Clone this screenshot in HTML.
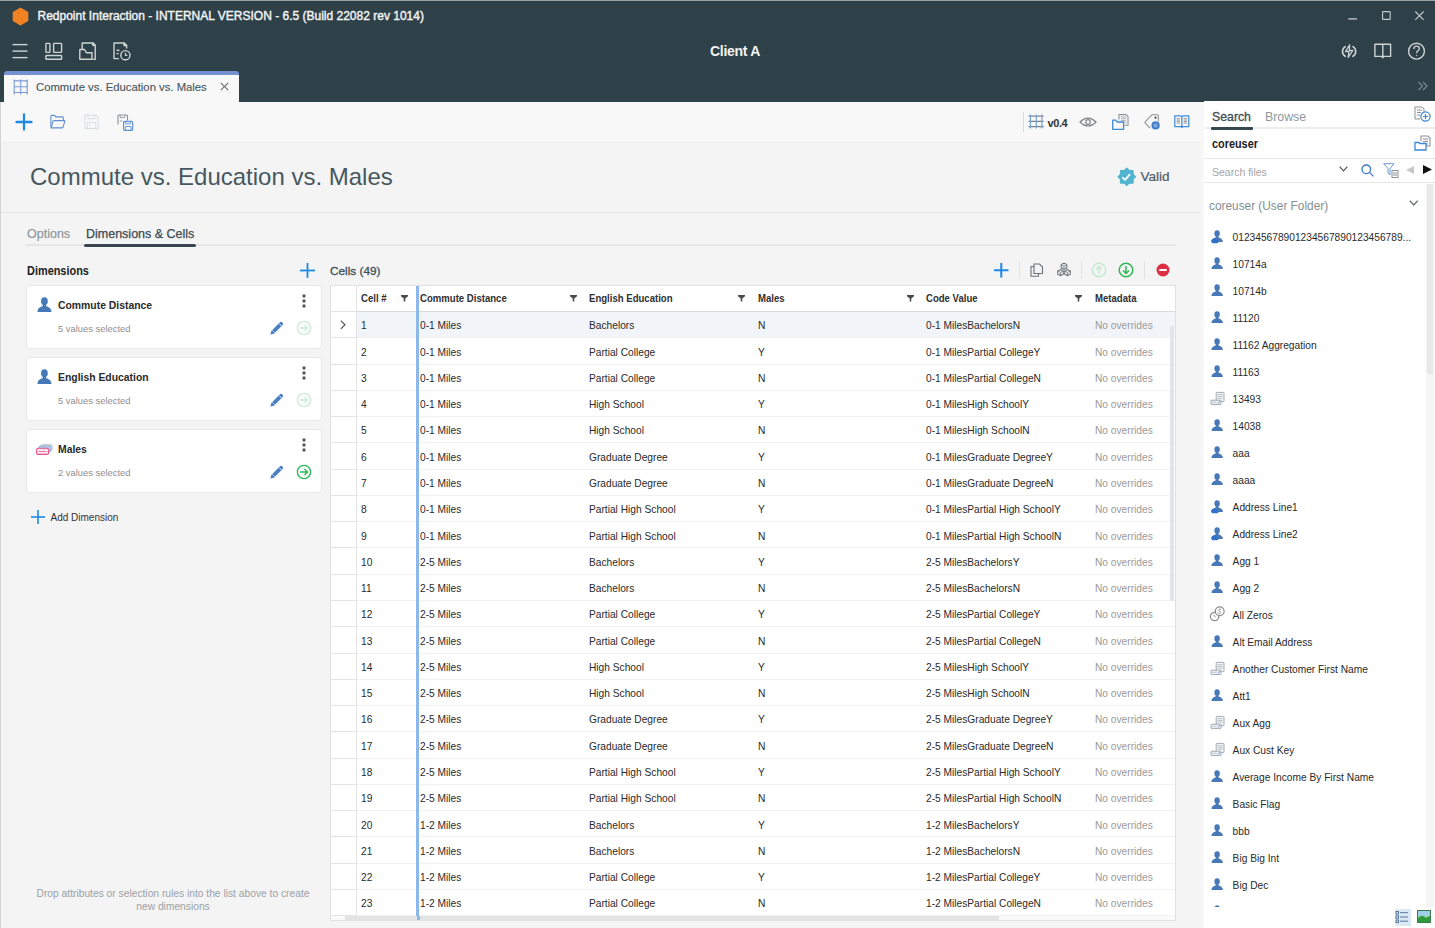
<!DOCTYPE html><html><head><meta charset="utf-8"><style>
*{box-sizing:border-box;margin:0;padding:0}
html,body{width:1435px;height:928px;overflow:hidden;background:#f4f4f4;font-family:"Liberation Sans",sans-serif;position:relative}
.a{position:absolute}
svg{position:absolute;overflow:visible}
.hdr{left:0;top:0;width:1435px;height:102px;background:#2e4048}
.topline{left:0;top:0;width:1435px;height:1px;background:#9aa3a6}
.wt{color:#f2f4f4;white-space:nowrap}
.tab{left:4px;top:71px;width:235px;height:31px;background:#f8f8f8;border-top:4px solid #7491d2;border-radius:3px 3px 0 0}
.tb{left:1px;top:102px;width:1200px;height:41px;background:#f8f8f8;border-bottom:1px solid #ececec}
.lb{left:0;top:102px;width:1px;height:826px;background:#d2d4d5}
.title{left:30px;top:163px;font-size:24px;color:#47575f;white-space:nowrap;letter-spacing:0px}
.sep{left:1px;top:212px;width:1200px;height:1px;background:#e6e6e6}
.t{white-space:nowrap}
.card{left:26px;width:296px;height:64px;background:#fff;border:1px solid #e5e7e9;border-radius:4px}
.tbl{left:330px;top:285px;width:846px;height:636px;background:#fff;border:1px solid #e0e0e0;overflow:hidden}
.row{left:0;width:844px;height:26.27px;border-bottom:1px solid #f1f1f1}
.cell{font-size:10.2px;color:#2a2a2a;white-space:nowrap}
.rp{left:1204px;top:101px;width:231px;height:827px;background:#fff}
.li{font-size:10.2px;color:#2a2a2a;white-space:nowrap}
</style></head><body>
<div class="a hdr"></div><div class="a topline"></div>
<svg style="left:12px;top:7px" width="17" height="19" viewBox="0 0 17 19"><polygon points="8.5,0.5 16.3,5 16.3,14 8.5,18.5 0.7,14 0.7,5" fill="#f08224"/></svg>
<div class="a wt" style="left:37.5px;top:8.8px;font-size:12px;line-height:15px;-webkit-text-stroke:0.4px #f2f4f4">Redpoint Interaction - INTERNAL VERSION - 6.5 (Build 22082 rev 1014)</div>
<svg style="left:1340px;top:0px" width="95" height="30" viewBox="1340 0 95 30" fill="none" stroke="#c4cbcd" stroke-width="1.1"><line x1="1348.3" y1="18.9" x2="1357" y2="18.9" stroke-width="1.3"/><rect x="1382.6" y="11.6" width="7.6" height="7.8" rx="0.5"/><line x1="1415.3" y1="11.5" x2="1423.6" y2="19.8"/><line x1="1423.6" y1="11.5" x2="1415.3" y2="19.8"/></svg>
<svg style="left:0px;top:35px" width="140" height="30" viewBox="0 0 140 30" fill="none" stroke="#cdd2d3" stroke-width="1.4" stroke-linejoin="round"><line x1="12.5" y1="9.6" x2="27.5" y2="9.6"/><line x1="12.5" y1="16.1" x2="27.5" y2="16.1"/><line x1="12.5" y1="22.6" x2="27.5" y2="22.6"/><rect x="45.9" y="8.4" width="4" height="9" rx="0.6"/><rect x="53.6" y="8.4" width="8" height="9" rx="0.6"/><rect x="45.9" y="20.5" width="15.7" height="3.8" rx="0.6"/><path d="M82.2 14 V8 H93 L95.2 10.2 V24.4 H92.8"/><path d="M92.8 10.2 H95 L92.8 8 Z" fill="#cdd2d3"/><path d="M79.8 24.3 V14.5 H84.5 L86.5 17.8 H92 V24.3 Z"/><path d="M119 23.6 H114 V8 H124 L126.6 10.6 V13.5"/><path d="M124 8 V10.6 H126.6 Z" fill="#cdd2d3"/><line x1="116.5" y1="15.3" x2="119.5" y2="15.3"/><line x1="116.5" y1="18.6" x2="118.5" y2="18.6"/><circle cx="125.4" cy="20.2" r="4.6"/><path d="M125.4 17.8 V20.4 H127.4" stroke-width="1.1"/></svg>
<div class="a wt" style="left:710px;top:42.8px;font-size:14px;font-weight:bold;line-height:16px;letter-spacing:-0.3px">Client A</div>
<svg style="left:1335px;top:40px" width="95" height="22" viewBox="1335 40 95 22" fill="none" stroke="#cdd2d3" stroke-width="1.4" stroke-linejoin="round"><path d="M1345.3 46.6 A5.6 5.6 0 0 0 1345.3 56.3" stroke-width="1.6" stroke-linecap="round"/><path d="M1352.9 46.6 A5.6 5.6 0 0 1 1352.9 56.3" stroke-width="1.6" stroke-linecap="round"/><path d="M1349.7 44.8 L1345.5 51.5 H1348.9 L1348.2 57.4 L1352.8 50.5 H1349.3 Z" stroke-width="1.3"/><path d="M1374.9 44.3 H1382.8 V56.4 H1374.9 Z M1382.8 44.3 H1390.6 V56.4 H1382.8"/><path d="M1381.6 56.6 L1382.8 58 L1384 56.6" stroke-width="1.1"/><circle cx="1416.5" cy="51.2" r="7.9"/><path d="M1413.9 49 Q1413.9 46.1 1416.6 46.1 Q1419.3 46.1 1419.3 48.6 Q1419.3 50.1 1417.6 51 Q1416.6 51.6 1416.6 53.3" stroke-width="1.3"/><circle cx="1416.6" cy="55.6" r="0.7" fill="#cdd2d3" stroke="none"/></svg>
<svg style="left:1417px;top:81px" width="12" height="10" viewBox="0 0 12 10" fill="none" stroke="#7d8b90" stroke-width="1.1"><path d="M1.5 1 L5.5 5 L1.5 9 M6 1 L10 5 L6 9"/></svg>
<div class="a tab"></div>
<svg style="left:13px;top:79px" width="16" height="16" viewBox="0 0 16 16" fill="none" stroke="#7c9bd6" stroke-width="1.1"><path d="M1.2 0.5 V15.5 M7.7 0.5 V15.5 M14.2 0.5 V15.5 M0.5 1.9 H15 M0.5 7.7 H15 M0.5 13.5 H15"/></svg>
<div class="a t" style="left:36px;top:80px;font-size:11.3px;color:#4a5960;line-height:14px;-webkit-text-stroke:0.15px #4a5960">Commute vs. Education vs. Males</div>
<svg style="left:220px;top:82px" width="9" height="9" viewBox="0 0 9 9" fill="none" stroke="#6d7479" stroke-width="1.2"><path d="M0.8 0.8 L8.2 8.2 M8.2 0.8 L0.8 8.2"/></svg>
<div class="a tb"></div><div class="a lb"></div>
<div class="a" style="left:1201px;top:102px;width:3px;height:826px;background:#f7f7f7"></div>
<svg style="left:15px;top:113px" width="18" height="18" viewBox="0 0 18 18" fill="none" stroke="#1e88e5" stroke-width="2.3" stroke-linecap="round"><line x1="9" y1="1.5" x2="9" y2="16.5"/><line x1="1.5" y1="9" x2="16.5" y2="9"/></svg>
<svg style="left:48px;top:112px" width="90" height="20" viewBox="48 112 90 20" fill="none" stroke-linejoin="round"><path d="M50.9 127.3 V116.2 Q50.9 115.4 51.7 115.4 H54.6 L55.7 116.9 H62.4 Q63.3 116.9 63.3 117.8 V120.4" stroke="#5f8fd0" stroke-width="1.1"/><path d="M51.1 127.9 L53.1 121.2 Q53.3 120.6 53.9 120.6 H64.3 Q65 120.6 64.8 121.3 L63.1 127.2 Q62.9 127.9 62.2 127.9 Z" stroke="#5f8fd0" stroke-width="1.1"/><path d="M85 115.2 H96.2 L98.1 117.1 V128.6 H85 Z" stroke="#d6dde6" stroke-width="1"/><path d="M88 115.2 V118.6 H94.6 V115.2 M87.3 128.6 V122.3 H95.8 V128.6 M88.8 124.5 H91" stroke="#d6dde6" stroke-width="0.9"/><path d="M118 124.4 V116 Q118 115 119 115 H126.6 Q127.5 115 127.5 116 V120.5" stroke="#8c9195" stroke-width="1.1"/><path d="M120.2 115 V117.6 H124.8 V115 M119.6 121 H122.5" stroke="#8c9195" stroke-width="0.8"/><rect x="123.6" y="121.3" width="9.1" height="9" rx="1.3" stroke="#5f8fd0" stroke-width="1.2" fill="#f8f8f8"/><path d="M125.8 121.3 V123.8 H130.4 V121.3 M125.4 130.3 V126.5 H131 V130.3" stroke="#5f8fd0" stroke-width="0.9"/></svg>
<div class="a" style="left:1023px;top:112px;width:1px;height:20px;background:#dcdcdc"></div>
<svg style="left:1027px;top:113px" width="18" height="17" viewBox="1027 113 18 17" fill="none" stroke-width="1.2"><path d="M1028.5 116.2 H1043.7 M1028.5 121.4 H1043.7 M1028.5 126.6 H1043.7" stroke="#7d858c"/><path d="M1030.4 114.5 V128.5 M1036.3 114.5 V128.5 M1041.9 114.5 V128.5" stroke="#79a0d8"/></svg>
<div class="a t" style="left:1047.5px;top:116.8px;font-size:11px;font-weight:bold;color:#333;line-height:13px;letter-spacing:-0.4px">v0.4</div>
<svg style="left:1079px;top:116px" width="18" height="12" viewBox="0 0 18 12" fill="none" stroke="#7c8287" stroke-width="1.2"><path d="M1 6 Q9 -2 17 6 Q9 14 1 6 Z"/><circle cx="9" cy="6" r="2.3"/></svg>
<svg style="left:1108px;top:110px" width="90" height="24" viewBox="1108 110 90 24" fill="none" stroke-width="1.1" stroke-linejoin="round"><path d="M1119 119.5 V114.6 H1126 L1128 116.6 V125.3 H1124.5" stroke="#8c9195"/><path d="M1120.8 117 H1126 M1120.8 118.8 H1126 M1120.8 120.6 H1126 M1124.6 122.4 H1126" stroke="#8c9195" stroke-width="0.7"/><path d="M1112.7 120.2 H1115.8 L1117.3 122 H1123.6 V129.3 H1112.7 Z" stroke="#3d8ad8" stroke-width="1.3" fill="#f8f8f8"/><path d="M1158.3 121 V115.8 Q1158.3 114.7 1157.2 114.7 H1152.2 L1145.3 121.6 Q1144.6 122.4 1145.3 123.2 L1150 128.2" stroke="#8c9195" stroke-width="1.1"/><path d="M1155.5 116.4 V119 M1154.2 117.7 H1156.8" stroke="#555" stroke-width="0.9"/><circle cx="1155.6" cy="125.4" r="4.1" fill="#3f7ccc" stroke="none"/><path d="M1153.6 125.4 H1157.6 M1153.8 124.3 Q1155.6 123.3 1157.4 124.3 M1153.8 126.5 Q1155.6 127.5 1157.4 126.5" stroke="#cfe0f5" stroke-width="0.6"/><path d="M1174.8 115.9 H1180.3 Q1181.8 115.9 1181.8 117.2 Q1181.8 115.9 1183.3 115.9 H1188.8 V126.6 H1174.8 Z M1181.8 117.2 V126.6" stroke="#3d8ad8" stroke-width="1.2"/><circle cx="1181.8" cy="127.2" r="0.9" fill="#3d8ad8" stroke="none"/><path d="M1176.6 118.6 H1180 M1176.6 120.1 H1180 M1176.6 121.6 H1180 M1176.6 123.1 H1180 M1183.6 118.6 H1187 M1183.6 120.1 H1187 M1183.6 121.6 H1187 M1183.6 123.1 H1187" stroke="#7a7a7a" stroke-width="0.7"/></svg>
<div class="a title">Commute vs. Education vs. Males</div>
<svg style="left:1116px;top:166px" width="22" height="22" viewBox="1116 166 22 22"><rect x="1119.9" y="169.9" width="13.8" height="13.8" rx="0.8" fill="#52b4cf"/><rect x="1120" y="170" width="13.6" height="13.6" rx="0.8" fill="#52b4cf" transform="rotate(45 1126.8 176.8)"/><path d="M1122.9 177.8 L1125.1 179.8 L1129.6 174.6" fill="none" stroke="#fff" stroke-width="1.8" stroke-linecap="round" stroke-linejoin="round"/></svg>
<div class="a t" style="left:1140.5px;top:169px;font-size:13.5px;color:#4d5c64;line-height:16px;-webkit-text-stroke:0.2px #4d5c64">Valid</div>
<div class="a sep"></div>
<div class="a" style="left:26px;top:244px;width:1150px;height:2px;background:#e6e6e6"></div>
<div class="a t" style="left:27px;top:227px;font-size:12.5px;color:#8d979c;line-height:15px;-webkit-text-stroke:0.2px #8d979c">Options</div>
<div class="a t" style="left:86px;top:227px;font-size:12.5px;color:#3a4a52;line-height:15px;-webkit-text-stroke:0.25px #3a4a52">Dimensions &amp; Cells</div>
<div class="a" style="left:84px;top:244.3px;width:111.5px;height:3px;background:#37474f;border-radius:1.5px"></div>
<div class="a t" style="left:26.5px;top:264px;font-size:12px;font-weight:bold;color:#222;line-height:14px;transform:scaleX(0.91);transform-origin:0 0">Dimensions</div>
<svg style="left:300px;top:263px" width="15" height="15" viewBox="0 0 15 15" fill="none" stroke="#1e88e5" stroke-width="1.8"><line x1="7.5" y1="0" x2="7.5" y2="15"/><line x1="0" y1="7.5" x2="15" y2="7.5"/></svg>
<div class="a card" style="top:285px"></div>
<svg style="left:36.8px;top:297px" width="15" height="15" viewBox="0 0 15 15"><ellipse fill="#4779b9" cx="7.4" cy="4.3" rx="3.35" ry="4"/><path fill="#4779b9" d="M0.5 14.9 C0.5 11.3 3 9.9 5.6 9.2 L5.9 7 H8.9 L9.2 9.2 C11.8 9.9 14.5 11.3 14.5 14.9 Z"/></svg>
<div class="a t" style="left:58px;top:299px;font-size:11.3px;font-weight:bold;color:#2a2a2a;line-height:13px;transform:scaleX(0.92);transform-origin:0 0">Commute Distance</div>
<div class="a t" style="left:58px;top:323.4px;font-size:9.4px;color:#8f8f8f;line-height:11px">5 values selected</div>
<svg style="left:302px;top:294px" width="4" height="14" viewBox="0 0 4 14" fill="#5c5c5c"><circle cx="2" cy="1.9" r="1.75"/><circle cx="2" cy="7" r="1.75"/><circle cx="2" cy="12.1" r="1.75"/></svg>
<svg style="left:270px;top:321px" width="14" height="14" viewBox="0 0 14 14"><path d="M0.3 13.5 L1.3 10 L10.2 1.1 Q11 0.4 11.8 1.1 L12.9 2.2 Q13.6 3 12.9 3.8 L4 12.7 Z" fill="#4a7fc1"/><path d="M9 2.4 L11.6 5" stroke="#fff" stroke-width="0.8"/><path d="M2.2 9.3 L4.7 11.8" stroke="#fff" stroke-width="0.6"/></svg>
<svg style="left:296px;top:320px" width="16" height="16" viewBox="0 0 16 16" fill="none" stroke="#c9edd5" stroke-width="1.4"><circle cx="8" cy="8" r="6.6"/><path d="M4 8 H11.5 M8.5 5 L11.5 8 L8.5 11"/></svg>
<div class="a card" style="top:357px"></div>
<svg style="left:36.8px;top:369px" width="15" height="15" viewBox="0 0 15 15"><ellipse fill="#4779b9" cx="7.4" cy="4.3" rx="3.35" ry="4"/><path fill="#4779b9" d="M0.5 14.9 C0.5 11.3 3 9.9 5.6 9.2 L5.9 7 H8.9 L9.2 9.2 C11.8 9.9 14.5 11.3 14.5 14.9 Z"/></svg>
<div class="a t" style="left:58px;top:371px;font-size:11.3px;font-weight:bold;color:#2a2a2a;line-height:13px;transform:scaleX(0.92);transform-origin:0 0">English Education</div>
<div class="a t" style="left:58px;top:395.4px;font-size:9.4px;color:#8f8f8f;line-height:11px">5 values selected</div>
<svg style="left:302px;top:366px" width="4" height="14" viewBox="0 0 4 14" fill="#5c5c5c"><circle cx="2" cy="1.9" r="1.75"/><circle cx="2" cy="7" r="1.75"/><circle cx="2" cy="12.1" r="1.75"/></svg>
<svg style="left:270px;top:393px" width="14" height="14" viewBox="0 0 14 14"><path d="M0.3 13.5 L1.3 10 L10.2 1.1 Q11 0.4 11.8 1.1 L12.9 2.2 Q13.6 3 12.9 3.8 L4 12.7 Z" fill="#4a7fc1"/><path d="M9 2.4 L11.6 5" stroke="#fff" stroke-width="0.8"/><path d="M2.2 9.3 L4.7 11.8" stroke="#fff" stroke-width="0.6"/></svg>
<svg style="left:296px;top:392px" width="16" height="16" viewBox="0 0 16 16" fill="none" stroke="#c9edd5" stroke-width="1.4"><circle cx="8" cy="8" r="6.6"/><path d="M4 8 H11.5 M8.5 5 L11.5 8 L8.5 11"/></svg>
<div class="a card" style="top:429px"></div>
<svg style="left:35px;top:443px" width="19" height="13" viewBox="35 443 19 13"><rect x="40.8" y="444.6" width="11.4" height="6.3" rx="1.6" fill="#d9d9d9" stroke="#bdbdbd" stroke-width="0.8"/><rect x="38.7" y="446" width="12" height="6.3" rx="1.6" fill="#b3cfee" stroke="#7eabdf" stroke-width="0.8"/><rect x="36.6" y="448.3" width="12" height="6.1" rx="1.5" fill="#f7d3e2" stroke="#e5578e" stroke-width="1.1"/><rect x="38.4" y="450" width="8.4" height="2.8" fill="#fff"/><line x1="38.8" y1="451.5" x2="46.4" y2="451.5" stroke="#e5578e" stroke-width="0.9"/></svg>
<div class="a t" style="left:58px;top:443px;font-size:11.3px;font-weight:bold;color:#2a2a2a;line-height:13px;transform:scaleX(0.92);transform-origin:0 0">Males</div>
<div class="a t" style="left:58px;top:467.4px;font-size:9.4px;color:#8f8f8f;line-height:11px">2 values selected</div>
<svg style="left:302px;top:438px" width="4" height="14" viewBox="0 0 4 14" fill="#5c5c5c"><circle cx="2" cy="1.9" r="1.75"/><circle cx="2" cy="7" r="1.75"/><circle cx="2" cy="12.1" r="1.75"/></svg>
<svg style="left:270px;top:465px" width="14" height="14" viewBox="0 0 14 14"><path d="M0.3 13.5 L1.3 10 L10.2 1.1 Q11 0.4 11.8 1.1 L12.9 2.2 Q13.6 3 12.9 3.8 L4 12.7 Z" fill="#4a7fc1"/><path d="M9 2.4 L11.6 5" stroke="#fff" stroke-width="0.8"/><path d="M2.2 9.3 L4.7 11.8" stroke="#fff" stroke-width="0.6"/></svg>
<svg style="left:296px;top:464px" width="16" height="16" viewBox="0 0 16 16" fill="none" stroke="#2fb855" stroke-width="1.4"><circle cx="8" cy="8" r="6.6"/><path d="M4 8 H11.5 M8.5 5 L11.5 8 L8.5 11"/></svg>
<svg style="left:31px;top:510px" width="14" height="14" viewBox="0 0 14 14" fill="none" stroke="#1e88e5" stroke-width="1.6"><line x1="7" y1="0" x2="7" y2="14"/><line x1="0" y1="7" x2="14" y2="7"/></svg>
<div class="a t" style="left:50.5px;top:511.5px;font-size:10px;color:#333;line-height:12px">Add Dimension</div>
<div class="a" style="left:23px;top:887px;width:300px;font-size:10.25px;color:#9ca1a5;line-height:13px;text-align:center">Drop attributes or selection rules into the list above to create<br>new dimensions</div>
<div class="a t" style="left:330px;top:263.5px;font-size:11.8px;color:#3d4e57;line-height:14px;-webkit-text-stroke:0.3px #3d4e57">Cells (49)</div>
<svg style="left:993.5px;top:263px" width="14.5" height="14.5" viewBox="0 0 14.5 14.5" fill="none" stroke="#1e88e5" stroke-width="2" stroke-linecap="round"><line x1="7.25" y1="0.8" x2="7.25" y2="13.7"/><line x1="0.8" y1="7.25" x2="13.7" y2="7.25"/></svg>
<div class="a" style="left:1019px;top:261px;width:1px;height:18px;background:#e2e2e2"></div>
<svg style="left:1030px;top:263px" width="13" height="14" viewBox="0 0 13 14" fill="none" stroke="#6d7378" stroke-width="1.1"><path d="M4 1 H9.5 L12.5 4 V10.5 H4 Z"/><path d="M4 3.5 H1 V13.3 H8.5 V10.5"/></svg>
<svg style="left:1056px;top:262px" width="16" height="16" viewBox="0 0 16 16" fill="#f4f4f4" stroke="#6d7378" stroke-width="1.1"><path d="M8 1.2 L10.8 2.6 V5.8 L8 7.2 L5.2 5.8 V2.6 Z"/><path d="M4.5 7.6 L7.3 9 V12.2 L4.5 13.6 L1.7 12.2 V9 Z"/><path d="M11.5 7.6 L14.3 9 V12.2 L11.5 13.6 L8.7 12.2 V9 Z"/><path d="M5.2 2.6 L8 4 L10.8 2.6 M8 4 V7.2 M1.7 9 L4.5 10.4 L7.3 9 M4.5 10.4 V13.6 M8.7 9 L11.5 10.4 L14.3 9 M11.5 10.4 V13.6" stroke-width="0.8"/></svg>
<div class="a" style="left:1081px;top:261px;width:1px;height:18px;background:#e2e2e2"></div>
<svg style="left:1091px;top:262px" width="16" height="16" viewBox="0 0 16 16" fill="none" stroke="#c4ead0" stroke-width="1.4"><circle cx="8" cy="8" r="6.8"/><path d="M8 12 V4.5 M5 7.5 L8 4.5 L11 7.5"/></svg>
<svg style="left:1118px;top:262px" width="16" height="16" viewBox="0 0 16 16" fill="none" stroke="#2fb855" stroke-width="1.5"><circle cx="8" cy="8" r="6.8"/><path d="M8 4 V11.5 M5 8.5 L8 11.5 L11 8.5"/></svg>
<div class="a" style="left:1144px;top:261px;width:1px;height:18px;background:#e2e2e2"></div>
<svg style="left:1155.7px;top:262.8px" width="14" height="14" viewBox="0 0 14 14"><circle cx="7" cy="7" r="6.5" fill="#dc2f46"/><rect x="3.2" y="6" width="7.6" height="2.1" rx="0.5" fill="#fff"/></svg>
<div class="a tbl">
<div class="a" style="left:0;top:0;width:844px;height:26px;border-bottom:1px solid #dadada"></div>
<div class="a t" style="left:30px;top:7px;font-size:10.2px;font-weight:bold;color:#303030;line-height:12px;transform:scaleX(0.94);transform-origin:0 0">Cell #</div>
<svg style="left:69.5px;top:8.8px" width="7" height="7" viewBox="0 0 7 7"><path d="M0 0 H7 V1.3 L4.3 3.6 V6.6 H2.7 V3.6 L0 1.3 Z" fill="#4a4a4a"/></svg>
<div class="a t" style="left:89px;top:7px;font-size:10.2px;font-weight:bold;color:#303030;line-height:12px;transform:scaleX(0.94);transform-origin:0 0">Commute Distance</div>
<svg style="left:238.5px;top:8.8px" width="7" height="7" viewBox="0 0 7 7"><path d="M0 0 H7 V1.3 L4.3 3.6 V6.6 H2.7 V3.6 L0 1.3 Z" fill="#4a4a4a"/></svg>
<div class="a t" style="left:258px;top:7px;font-size:10.2px;font-weight:bold;color:#303030;line-height:12px;transform:scaleX(0.94);transform-origin:0 0">English Education</div>
<svg style="left:407px;top:8.8px" width="7" height="7" viewBox="0 0 7 7"><path d="M0 0 H7 V1.3 L4.3 3.6 V6.6 H2.7 V3.6 L0 1.3 Z" fill="#4a4a4a"/></svg>
<div class="a t" style="left:427px;top:7px;font-size:10.2px;font-weight:bold;color:#303030;line-height:12px;transform:scaleX(0.94);transform-origin:0 0">Males</div>
<svg style="left:575.5px;top:8.8px" width="7" height="7" viewBox="0 0 7 7"><path d="M0 0 H7 V1.3 L4.3 3.6 V6.6 H2.7 V3.6 L0 1.3 Z" fill="#4a4a4a"/></svg>
<div class="a t" style="left:595px;top:7px;font-size:10.2px;font-weight:bold;color:#303030;line-height:12px;transform:scaleX(0.94);transform-origin:0 0">Code Value</div>
<svg style="left:744px;top:8.8px" width="7" height="7" viewBox="0 0 7 7"><path d="M0 0 H7 V1.3 L4.3 3.6 V6.6 H2.7 V3.6 L0 1.3 Z" fill="#4a4a4a"/></svg>
<div class="a t" style="left:764px;top:7px;font-size:10.2px;font-weight:bold;color:#303030;line-height:12px;transform:scaleX(0.94);transform-origin:0 0">Metadata</div>
<div class="a row" style="top:26.00px;background:#f1f5f9"></div>
<div class="a cell" style="left:30px;top:34.40px;line-height:12px">1</div>
<div class="a cell" style="left:89px;top:34.40px;line-height:12px">0-1 Miles</div>
<div class="a cell" style="left:258px;top:34.40px;line-height:12px">Bachelors</div>
<div class="a cell" style="left:427px;top:34.40px;line-height:12px">N</div>
<div class="a cell" style="left:595px;top:34.40px;line-height:12px">0-1 MilesBachelorsN</div>
<div class="a cell" style="left:764px;top:34.40px;line-height:12px;color:#9a9a9a">No overrides</div>
<div class="a row" style="top:52.27px;background:#fff"></div>
<div class="a cell" style="left:30px;top:60.67px;line-height:12px">2</div>
<div class="a cell" style="left:89px;top:60.67px;line-height:12px">0-1 Miles</div>
<div class="a cell" style="left:258px;top:60.67px;line-height:12px">Partial College</div>
<div class="a cell" style="left:427px;top:60.67px;line-height:12px">Y</div>
<div class="a cell" style="left:595px;top:60.67px;line-height:12px">0-1 MilesPartial CollegeY</div>
<div class="a cell" style="left:764px;top:60.67px;line-height:12px;color:#9a9a9a">No overrides</div>
<div class="a row" style="top:78.54px;background:#fff"></div>
<div class="a cell" style="left:30px;top:86.94px;line-height:12px">3</div>
<div class="a cell" style="left:89px;top:86.94px;line-height:12px">0-1 Miles</div>
<div class="a cell" style="left:258px;top:86.94px;line-height:12px">Partial College</div>
<div class="a cell" style="left:427px;top:86.94px;line-height:12px">N</div>
<div class="a cell" style="left:595px;top:86.94px;line-height:12px">0-1 MilesPartial CollegeN</div>
<div class="a cell" style="left:764px;top:86.94px;line-height:12px;color:#9a9a9a">No overrides</div>
<div class="a row" style="top:104.81px;background:#fff"></div>
<div class="a cell" style="left:30px;top:113.21px;line-height:12px">4</div>
<div class="a cell" style="left:89px;top:113.21px;line-height:12px">0-1 Miles</div>
<div class="a cell" style="left:258px;top:113.21px;line-height:12px">High School</div>
<div class="a cell" style="left:427px;top:113.21px;line-height:12px">Y</div>
<div class="a cell" style="left:595px;top:113.21px;line-height:12px">0-1 MilesHigh SchoolY</div>
<div class="a cell" style="left:764px;top:113.21px;line-height:12px;color:#9a9a9a">No overrides</div>
<div class="a row" style="top:131.08px;background:#fff"></div>
<div class="a cell" style="left:30px;top:139.48px;line-height:12px">5</div>
<div class="a cell" style="left:89px;top:139.48px;line-height:12px">0-1 Miles</div>
<div class="a cell" style="left:258px;top:139.48px;line-height:12px">High School</div>
<div class="a cell" style="left:427px;top:139.48px;line-height:12px">N</div>
<div class="a cell" style="left:595px;top:139.48px;line-height:12px">0-1 MilesHigh SchoolN</div>
<div class="a cell" style="left:764px;top:139.48px;line-height:12px;color:#9a9a9a">No overrides</div>
<div class="a row" style="top:157.35px;background:#fff"></div>
<div class="a cell" style="left:30px;top:165.75px;line-height:12px">6</div>
<div class="a cell" style="left:89px;top:165.75px;line-height:12px">0-1 Miles</div>
<div class="a cell" style="left:258px;top:165.75px;line-height:12px">Graduate Degree</div>
<div class="a cell" style="left:427px;top:165.75px;line-height:12px">Y</div>
<div class="a cell" style="left:595px;top:165.75px;line-height:12px">0-1 MilesGraduate DegreeY</div>
<div class="a cell" style="left:764px;top:165.75px;line-height:12px;color:#9a9a9a">No overrides</div>
<div class="a row" style="top:183.62px;background:#fff"></div>
<div class="a cell" style="left:30px;top:192.02px;line-height:12px">7</div>
<div class="a cell" style="left:89px;top:192.02px;line-height:12px">0-1 Miles</div>
<div class="a cell" style="left:258px;top:192.02px;line-height:12px">Graduate Degree</div>
<div class="a cell" style="left:427px;top:192.02px;line-height:12px">N</div>
<div class="a cell" style="left:595px;top:192.02px;line-height:12px">0-1 MilesGraduate DegreeN</div>
<div class="a cell" style="left:764px;top:192.02px;line-height:12px;color:#9a9a9a">No overrides</div>
<div class="a row" style="top:209.89px;background:#fff"></div>
<div class="a cell" style="left:30px;top:218.29px;line-height:12px">8</div>
<div class="a cell" style="left:89px;top:218.29px;line-height:12px">0-1 Miles</div>
<div class="a cell" style="left:258px;top:218.29px;line-height:12px">Partial High School</div>
<div class="a cell" style="left:427px;top:218.29px;line-height:12px">Y</div>
<div class="a cell" style="left:595px;top:218.29px;line-height:12px">0-1 MilesPartial High SchoolY</div>
<div class="a cell" style="left:764px;top:218.29px;line-height:12px;color:#9a9a9a">No overrides</div>
<div class="a row" style="top:236.16px;background:#fff"></div>
<div class="a cell" style="left:30px;top:244.56px;line-height:12px">9</div>
<div class="a cell" style="left:89px;top:244.56px;line-height:12px">0-1 Miles</div>
<div class="a cell" style="left:258px;top:244.56px;line-height:12px">Partial High School</div>
<div class="a cell" style="left:427px;top:244.56px;line-height:12px">N</div>
<div class="a cell" style="left:595px;top:244.56px;line-height:12px">0-1 MilesPartial High SchoolN</div>
<div class="a cell" style="left:764px;top:244.56px;line-height:12px;color:#9a9a9a">No overrides</div>
<div class="a row" style="top:262.43px;background:#fff"></div>
<div class="a cell" style="left:30px;top:270.83px;line-height:12px">10</div>
<div class="a cell" style="left:89px;top:270.83px;line-height:12px">2-5 Miles</div>
<div class="a cell" style="left:258px;top:270.83px;line-height:12px">Bachelors</div>
<div class="a cell" style="left:427px;top:270.83px;line-height:12px">Y</div>
<div class="a cell" style="left:595px;top:270.83px;line-height:12px">2-5 MilesBachelorsY</div>
<div class="a cell" style="left:764px;top:270.83px;line-height:12px;color:#9a9a9a">No overrides</div>
<div class="a row" style="top:288.70px;background:#fff"></div>
<div class="a cell" style="left:30px;top:297.10px;line-height:12px">11</div>
<div class="a cell" style="left:89px;top:297.10px;line-height:12px">2-5 Miles</div>
<div class="a cell" style="left:258px;top:297.10px;line-height:12px">Bachelors</div>
<div class="a cell" style="left:427px;top:297.10px;line-height:12px">N</div>
<div class="a cell" style="left:595px;top:297.10px;line-height:12px">2-5 MilesBachelorsN</div>
<div class="a cell" style="left:764px;top:297.10px;line-height:12px;color:#9a9a9a">No overrides</div>
<div class="a row" style="top:314.97px;background:#fff"></div>
<div class="a cell" style="left:30px;top:323.37px;line-height:12px">12</div>
<div class="a cell" style="left:89px;top:323.37px;line-height:12px">2-5 Miles</div>
<div class="a cell" style="left:258px;top:323.37px;line-height:12px">Partial College</div>
<div class="a cell" style="left:427px;top:323.37px;line-height:12px">Y</div>
<div class="a cell" style="left:595px;top:323.37px;line-height:12px">2-5 MilesPartial CollegeY</div>
<div class="a cell" style="left:764px;top:323.37px;line-height:12px;color:#9a9a9a">No overrides</div>
<div class="a row" style="top:341.24px;background:#fff"></div>
<div class="a cell" style="left:30px;top:349.64px;line-height:12px">13</div>
<div class="a cell" style="left:89px;top:349.64px;line-height:12px">2-5 Miles</div>
<div class="a cell" style="left:258px;top:349.64px;line-height:12px">Partial College</div>
<div class="a cell" style="left:427px;top:349.64px;line-height:12px">N</div>
<div class="a cell" style="left:595px;top:349.64px;line-height:12px">2-5 MilesPartial CollegeN</div>
<div class="a cell" style="left:764px;top:349.64px;line-height:12px;color:#9a9a9a">No overrides</div>
<div class="a row" style="top:367.51px;background:#fff"></div>
<div class="a cell" style="left:30px;top:375.91px;line-height:12px">14</div>
<div class="a cell" style="left:89px;top:375.91px;line-height:12px">2-5 Miles</div>
<div class="a cell" style="left:258px;top:375.91px;line-height:12px">High School</div>
<div class="a cell" style="left:427px;top:375.91px;line-height:12px">Y</div>
<div class="a cell" style="left:595px;top:375.91px;line-height:12px">2-5 MilesHigh SchoolY</div>
<div class="a cell" style="left:764px;top:375.91px;line-height:12px;color:#9a9a9a">No overrides</div>
<div class="a row" style="top:393.78px;background:#fff"></div>
<div class="a cell" style="left:30px;top:402.18px;line-height:12px">15</div>
<div class="a cell" style="left:89px;top:402.18px;line-height:12px">2-5 Miles</div>
<div class="a cell" style="left:258px;top:402.18px;line-height:12px">High School</div>
<div class="a cell" style="left:427px;top:402.18px;line-height:12px">N</div>
<div class="a cell" style="left:595px;top:402.18px;line-height:12px">2-5 MilesHigh SchoolN</div>
<div class="a cell" style="left:764px;top:402.18px;line-height:12px;color:#9a9a9a">No overrides</div>
<div class="a row" style="top:420.05px;background:#fff"></div>
<div class="a cell" style="left:30px;top:428.45px;line-height:12px">16</div>
<div class="a cell" style="left:89px;top:428.45px;line-height:12px">2-5 Miles</div>
<div class="a cell" style="left:258px;top:428.45px;line-height:12px">Graduate Degree</div>
<div class="a cell" style="left:427px;top:428.45px;line-height:12px">Y</div>
<div class="a cell" style="left:595px;top:428.45px;line-height:12px">2-5 MilesGraduate DegreeY</div>
<div class="a cell" style="left:764px;top:428.45px;line-height:12px;color:#9a9a9a">No overrides</div>
<div class="a row" style="top:446.32px;background:#fff"></div>
<div class="a cell" style="left:30px;top:454.72px;line-height:12px">17</div>
<div class="a cell" style="left:89px;top:454.72px;line-height:12px">2-5 Miles</div>
<div class="a cell" style="left:258px;top:454.72px;line-height:12px">Graduate Degree</div>
<div class="a cell" style="left:427px;top:454.72px;line-height:12px">N</div>
<div class="a cell" style="left:595px;top:454.72px;line-height:12px">2-5 MilesGraduate DegreeN</div>
<div class="a cell" style="left:764px;top:454.72px;line-height:12px;color:#9a9a9a">No overrides</div>
<div class="a row" style="top:472.59px;background:#fff"></div>
<div class="a cell" style="left:30px;top:480.99px;line-height:12px">18</div>
<div class="a cell" style="left:89px;top:480.99px;line-height:12px">2-5 Miles</div>
<div class="a cell" style="left:258px;top:480.99px;line-height:12px">Partial High School</div>
<div class="a cell" style="left:427px;top:480.99px;line-height:12px">Y</div>
<div class="a cell" style="left:595px;top:480.99px;line-height:12px">2-5 MilesPartial High SchoolY</div>
<div class="a cell" style="left:764px;top:480.99px;line-height:12px;color:#9a9a9a">No overrides</div>
<div class="a row" style="top:498.86px;background:#fff"></div>
<div class="a cell" style="left:30px;top:507.26px;line-height:12px">19</div>
<div class="a cell" style="left:89px;top:507.26px;line-height:12px">2-5 Miles</div>
<div class="a cell" style="left:258px;top:507.26px;line-height:12px">Partial High School</div>
<div class="a cell" style="left:427px;top:507.26px;line-height:12px">N</div>
<div class="a cell" style="left:595px;top:507.26px;line-height:12px">2-5 MilesPartial High SchoolN</div>
<div class="a cell" style="left:764px;top:507.26px;line-height:12px;color:#9a9a9a">No overrides</div>
<div class="a row" style="top:525.13px;background:#fff"></div>
<div class="a cell" style="left:30px;top:533.53px;line-height:12px">20</div>
<div class="a cell" style="left:89px;top:533.53px;line-height:12px">1-2 Miles</div>
<div class="a cell" style="left:258px;top:533.53px;line-height:12px">Bachelors</div>
<div class="a cell" style="left:427px;top:533.53px;line-height:12px">Y</div>
<div class="a cell" style="left:595px;top:533.53px;line-height:12px">1-2 MilesBachelorsY</div>
<div class="a cell" style="left:764px;top:533.53px;line-height:12px;color:#9a9a9a">No overrides</div>
<div class="a row" style="top:551.40px;background:#fff"></div>
<div class="a cell" style="left:30px;top:559.80px;line-height:12px">21</div>
<div class="a cell" style="left:89px;top:559.80px;line-height:12px">1-2 Miles</div>
<div class="a cell" style="left:258px;top:559.80px;line-height:12px">Bachelors</div>
<div class="a cell" style="left:427px;top:559.80px;line-height:12px">N</div>
<div class="a cell" style="left:595px;top:559.80px;line-height:12px">1-2 MilesBachelorsN</div>
<div class="a cell" style="left:764px;top:559.80px;line-height:12px;color:#9a9a9a">No overrides</div>
<div class="a row" style="top:577.67px;background:#fff"></div>
<div class="a cell" style="left:30px;top:586.07px;line-height:12px">22</div>
<div class="a cell" style="left:89px;top:586.07px;line-height:12px">1-2 Miles</div>
<div class="a cell" style="left:258px;top:586.07px;line-height:12px">Partial College</div>
<div class="a cell" style="left:427px;top:586.07px;line-height:12px">Y</div>
<div class="a cell" style="left:595px;top:586.07px;line-height:12px">1-2 MilesPartial CollegeY</div>
<div class="a cell" style="left:764px;top:586.07px;line-height:12px;color:#9a9a9a">No overrides</div>
<div class="a row" style="top:603.94px;background:#fff"></div>
<div class="a cell" style="left:30px;top:612.34px;line-height:12px">23</div>
<div class="a cell" style="left:89px;top:612.34px;line-height:12px">1-2 Miles</div>
<div class="a cell" style="left:258px;top:612.34px;line-height:12px">Partial College</div>
<div class="a cell" style="left:427px;top:612.34px;line-height:12px">N</div>
<div class="a cell" style="left:595px;top:612.34px;line-height:12px">1-2 MilesPartial CollegeN</div>
<div class="a cell" style="left:764px;top:612.34px;line-height:12px;color:#9a9a9a">No overrides</div>
<div class="a" style="left:0;top:0;width:26px;height:636px;background:#fff;border-right:1px solid #e3e3e3"></div>
<div class="a" style="left:0;top:25.00px;width:25px;height:1px;background:#e3e3e3"></div>
<div class="a" style="left:0;top:51.27px;width:25px;height:1px;background:#e3e3e3"></div>
<div class="a" style="left:0;top:77.54px;width:25px;height:1px;background:#e3e3e3"></div>
<div class="a" style="left:0;top:103.81px;width:25px;height:1px;background:#e3e3e3"></div>
<div class="a" style="left:0;top:130.08px;width:25px;height:1px;background:#e3e3e3"></div>
<div class="a" style="left:0;top:156.35px;width:25px;height:1px;background:#e3e3e3"></div>
<div class="a" style="left:0;top:182.62px;width:25px;height:1px;background:#e3e3e3"></div>
<div class="a" style="left:0;top:208.89px;width:25px;height:1px;background:#e3e3e3"></div>
<div class="a" style="left:0;top:235.16px;width:25px;height:1px;background:#e3e3e3"></div>
<div class="a" style="left:0;top:261.43px;width:25px;height:1px;background:#e3e3e3"></div>
<div class="a" style="left:0;top:287.70px;width:25px;height:1px;background:#e3e3e3"></div>
<div class="a" style="left:0;top:313.97px;width:25px;height:1px;background:#e3e3e3"></div>
<div class="a" style="left:0;top:340.24px;width:25px;height:1px;background:#e3e3e3"></div>
<div class="a" style="left:0;top:366.51px;width:25px;height:1px;background:#e3e3e3"></div>
<div class="a" style="left:0;top:392.78px;width:25px;height:1px;background:#e3e3e3"></div>
<div class="a" style="left:0;top:419.05px;width:25px;height:1px;background:#e3e3e3"></div>
<div class="a" style="left:0;top:445.32px;width:25px;height:1px;background:#e3e3e3"></div>
<div class="a" style="left:0;top:471.59px;width:25px;height:1px;background:#e3e3e3"></div>
<div class="a" style="left:0;top:497.86px;width:25px;height:1px;background:#e3e3e3"></div>
<div class="a" style="left:0;top:524.13px;width:25px;height:1px;background:#e3e3e3"></div>
<div class="a" style="left:0;top:550.40px;width:25px;height:1px;background:#e3e3e3"></div>
<div class="a" style="left:0;top:576.67px;width:25px;height:1px;background:#e3e3e3"></div>
<div class="a" style="left:0;top:602.94px;width:25px;height:1px;background:#e3e3e3"></div>
<div class="a" style="left:0;top:629.21px;width:25px;height:1px;background:#e3e3e3"></div>
<svg style="left:9.4px;top:34px" width="6" height="9.5" viewBox="0 0 6 9.5" fill="none" stroke="#555" stroke-width="1.2"><path d="M0.8 0.6 L5 4.75 L0.8 8.9"/></svg>
<div class="a" style="left:85.3px;top:0;width:3.2px;height:636px;background:#8cb8ec"></div>
<div class="a" style="left:839px;top:40px;width:4px;height:275px;background:#e2e5e8"></div>
<div class="a" style="left:0;top:630px;width:844px;height:5px;background:#fafafa"></div>
<div class="a" style="left:14px;top:630px;width:654px;height:4px;background:#e3e3e3"></div>
<div class="a" style="left:86px;top:630px;width:3px;height:5px;background:#8cb8ec"></div>
</div>
<div class="a rp"></div>
<div class="a t" style="left:1212px;top:109.5px;font-size:12.3px;color:#3d4e57;line-height:15px;-webkit-text-stroke:0.3px #3d4e57">Search</div>
<div class="a t" style="left:1265px;top:109.5px;font-size:12.3px;color:#8d979c;line-height:15px">Browse</div>
<div class="a" style="left:1205px;top:127px;width:230px;height:2px;background:#ececec"></div>
<div class="a" style="left:1211px;top:127px;width:42px;height:3px;background:#37474f;border-radius:1px"></div>
<svg style="left:1414px;top:106px" width="17" height="16" viewBox="0 0 17 16" fill="none" stroke-width="1"><path d="M1 1 H8 L10 3 V6 M1 1 V13 H6" stroke="#8c9195"/><path d="M3 4 H8 M3 6.5 H7 M3 9 H6" stroke="#8c9195"/><circle cx="11.5" cy="10.5" r="4.6" stroke="#3d86d6" stroke-width="1.2" fill="#fff"/><path d="M11.5 8 V13 M9 10.5 H14" stroke="#3d86d6" stroke-width="1.2"/></svg>
<div class="a t" style="left:1212px;top:137px;font-size:12.5px;font-weight:bold;color:#222;line-height:14px;transform:scaleX(0.87);transform-origin:0 0">coreuser</div>
<svg style="left:1414px;top:135px" width="17" height="16" viewBox="0 0 17 16" fill="none" stroke-width="1.1"><path d="M7 6 V1 H14 L16 3 V11 H12" stroke="#8c9195"/><line x1="9" y1="4" x2="14" y2="4" stroke="#8c9195"/><line x1="9" y1="6.5" x2="14" y2="6.5" stroke="#8c9195"/><line x1="12" y1="9" x2="14" y2="9" stroke="#8c9195"/><path d="M1 7.5 H5 L6 8.5 H12 V15 H1 Z" stroke="#3d86d6" stroke-width="1.3"/></svg>
<div class="a" style="left:1205px;top:158px;width:230px;height:1px;background:#e6e6e6"></div>
<div class="a t" style="left:1212px;top:166px;font-size:10.5px;color:#a5a5a5;line-height:12px">Search files</div>
<svg style="left:1339px;top:166px" width="9" height="6" viewBox="0 0 9 6" fill="none" stroke="#555" stroke-width="1.2"><path d="M0.6 0.6 L4.5 4.8 L8.4 0.6"/></svg>
<svg style="left:1361px;top:164px" width="13" height="13" viewBox="0 0 13 13" fill="none" stroke="#3d78c8" stroke-width="1.3"><circle cx="5.3" cy="5.3" r="4.3"/><line x1="8.4" y1="8.4" x2="12.4" y2="12.4"/></svg>
<svg style="left:1383px;top:163px" width="16" height="15" viewBox="0 0 16 15" fill="none" stroke="#6a9ad6" stroke-width="1"><path d="M0.7 0.7 H11 L7 5.5 V12 L5 10 V5.5 Z"/><rect x="9" y="7.5" width="6" height="7" stroke="#8c9195" fill="#fff"/><path d="M11 9 V13 M13 9 V13" stroke="#8c9195"/></svg>
<svg style="left:1406px;top:166px" width="8" height="8" viewBox="0 0 8 8"><path d="M0 4 L8 0 V8 Z" fill="#c8c8c8"/></svg>
<svg style="left:1423px;top:165px" width="9" height="9" viewBox="0 0 9 9"><path d="M9 4.5 L0 0 V9 Z" fill="#111"/></svg>
<div class="a" style="left:1205px;top:182px;width:230px;height:1px;background:#e6e6e6"></div>
<div class="a" style="left:1426px;top:184px;width:7.5px;height:723px;background:#f5f5f5"></div>
<div class="a" style="left:1426.5px;top:184px;width:6px;height:190px;background:#e8e8e8"></div>
<div class="a t" style="left:1209px;top:198.5px;font-size:11.85px;color:#858d92;line-height:15px">coreuser (User Folder)</div>
<svg style="left:1409.3px;top:199.6px" width="9.5" height="6.5" viewBox="0 0 9.5 6.5" fill="none" stroke="#6f767b" stroke-width="1.5"><path d="M0.8 0.8 L4.75 5 L8.7 0.8"/></svg>
<svg style="left:1211.1px;top:230.3px" width="12.4" height="12" viewBox="0 0 15 14.6"><ellipse cx="7.4" cy="4.2" rx="3.3" ry="4" fill="#4779b9"/><path d="M0.5 14.5 C0.5 11 3 9.7 5.6 9 L5.9 7 H8.9 L9.2 9 C11.8 9.7 14.5 11 14.5 14.5 Z" fill="#4779b9"/><path d="M0.4 12.3 Q2.2 9.6 5 10.6 Q7.6 11.8 9.2 15.6 Q5.6 16.6 1.6 16 Q-0.2 15 0.4 12.3 Z" fill="#2f73c9"/></svg>
<div class="a li" style="left:1232.6px;top:231.6px;line-height:12px">012345678901234567890123456789...</div>
<svg style="left:1211.1px;top:257.3px" width="12.4" height="12" viewBox="0 0 15 14.6"><ellipse cx="7.4" cy="4.2" rx="3.3" ry="4" fill="#4779b9"/><path d="M0.5 14.5 C0.5 11 3 9.7 5.6 9 L5.9 7 H8.9 L9.2 9 C11.8 9.7 14.5 11 14.5 14.5 Z" fill="#4779b9"/></svg>
<div class="a li" style="left:1232.6px;top:258.6px;line-height:12px">10714a</div>
<svg style="left:1211.1px;top:284.3px" width="12.4" height="12" viewBox="0 0 15 14.6"><ellipse cx="7.4" cy="4.2" rx="3.3" ry="4" fill="#4779b9"/><path d="M0.5 14.5 C0.5 11 3 9.7 5.6 9 L5.9 7 H8.9 L9.2 9 C11.8 9.7 14.5 11 14.5 14.5 Z" fill="#4779b9"/></svg>
<div class="a li" style="left:1232.6px;top:285.6px;line-height:12px">10714b</div>
<svg style="left:1211.1px;top:311.3px" width="12.4" height="12" viewBox="0 0 15 14.6"><ellipse cx="7.4" cy="4.2" rx="3.3" ry="4" fill="#4779b9"/><path d="M0.5 14.5 C0.5 11 3 9.7 5.6 9 L5.9 7 H8.9 L9.2 9 C11.8 9.7 14.5 11 14.5 14.5 Z" fill="#4779b9"/></svg>
<div class="a li" style="left:1232.6px;top:312.6px;line-height:12px">11120</div>
<svg style="left:1211.1px;top:338.3px" width="12.4" height="12" viewBox="0 0 15 14.6"><ellipse cx="7.4" cy="4.2" rx="3.3" ry="4" fill="#4779b9"/><path d="M0.5 14.5 C0.5 11 3 9.7 5.6 9 L5.9 7 H8.9 L9.2 9 C11.8 9.7 14.5 11 14.5 14.5 Z" fill="#4779b9"/></svg>
<div class="a li" style="left:1232.6px;top:339.6px;line-height:12px">11162 Aggregation</div>
<svg style="left:1211.1px;top:365.3px" width="12.4" height="12" viewBox="0 0 15 14.6"><ellipse cx="7.4" cy="4.2" rx="3.3" ry="4" fill="#4779b9"/><path d="M0.5 14.5 C0.5 11 3 9.7 5.6 9 L5.9 7 H8.9 L9.2 9 C11.8 9.7 14.5 11 14.5 14.5 Z" fill="#4779b9"/></svg>
<div class="a li" style="left:1232.6px;top:366.6px;line-height:12px">11163</div>
<svg style="left:1210px;top:392px" width="15" height="14" viewBox="0 0 15 14" fill="none" stroke-width="0.9"><rect x="6.2" y="0.4" width="7.8" height="9.2" rx="0.6" stroke="#9aa3ab" fill="#f4f6f8"/><path d="M7.6 2.6 H12.6 M7.6 4.4 H12.6 M7.6 6.2 H12.6" stroke="#aab2ba" stroke-width="0.8"/><rect x="1" y="8.2" width="10" height="4.4" rx="0.8" stroke="#9aa3ab" fill="#e9edf1"/><path d="M2.2 10.4 H6.5" stroke="#c4cbd2"/><path d="M8 11.6 L10.2 9" stroke="#6f9be0" stroke-width="1"/></svg>
<div class="a li" style="left:1232.6px;top:393.6px;line-height:12px">13493</div>
<svg style="left:1211.1px;top:419.3px" width="12.4" height="12" viewBox="0 0 15 14.6"><ellipse cx="7.4" cy="4.2" rx="3.3" ry="4" fill="#4779b9"/><path d="M0.5 14.5 C0.5 11 3 9.7 5.6 9 L5.9 7 H8.9 L9.2 9 C11.8 9.7 14.5 11 14.5 14.5 Z" fill="#4779b9"/></svg>
<div class="a li" style="left:1232.6px;top:420.6px;line-height:12px">14038</div>
<svg style="left:1211.1px;top:446.3px" width="12.4" height="12" viewBox="0 0 15 14.6"><ellipse cx="7.4" cy="4.2" rx="3.3" ry="4" fill="#4779b9"/><path d="M0.5 14.5 C0.5 11 3 9.7 5.6 9 L5.9 7 H8.9 L9.2 9 C11.8 9.7 14.5 11 14.5 14.5 Z" fill="#4779b9"/></svg>
<div class="a li" style="left:1232.6px;top:447.6px;line-height:12px">aaa</div>
<svg style="left:1211.1px;top:473.3px" width="12.4" height="12" viewBox="0 0 15 14.6"><ellipse cx="7.4" cy="4.2" rx="3.3" ry="4" fill="#4779b9"/><path d="M0.5 14.5 C0.5 11 3 9.7 5.6 9 L5.9 7 H8.9 L9.2 9 C11.8 9.7 14.5 11 14.5 14.5 Z" fill="#4779b9"/></svg>
<div class="a li" style="left:1232.6px;top:474.6px;line-height:12px">aaaa</div>
<svg style="left:1211.1px;top:500.3px" width="12.4" height="12" viewBox="0 0 15 14.6"><ellipse cx="7.4" cy="4.2" rx="3.3" ry="4" fill="#4779b9"/><path d="M0.5 14.5 C0.5 11 3 9.7 5.6 9 L5.9 7 H8.9 L9.2 9 C11.8 9.7 14.5 11 14.5 14.5 Z" fill="#4779b9"/><path d="M0.4 12.3 Q2.2 9.6 5 10.6 Q7.6 11.8 9.2 15.6 Q5.6 16.6 1.6 16 Q-0.2 15 0.4 12.3 Z" fill="#2f73c9"/></svg>
<div class="a li" style="left:1232.6px;top:501.6px;line-height:12px">Address Line1</div>
<svg style="left:1211.1px;top:527.3px" width="12.4" height="12" viewBox="0 0 15 14.6"><ellipse cx="7.4" cy="4.2" rx="3.3" ry="4" fill="#4779b9"/><path d="M0.5 14.5 C0.5 11 3 9.7 5.6 9 L5.9 7 H8.9 L9.2 9 C11.8 9.7 14.5 11 14.5 14.5 Z" fill="#4779b9"/><path d="M0.4 12.3 Q2.2 9.6 5 10.6 Q7.6 11.8 9.2 15.6 Q5.6 16.6 1.6 16 Q-0.2 15 0.4 12.3 Z" fill="#2f73c9"/></svg>
<div class="a li" style="left:1232.6px;top:528.6px;line-height:12px">Address Line2</div>
<svg style="left:1211.1px;top:554.3px" width="12.4" height="12" viewBox="0 0 15 14.6"><ellipse cx="7.4" cy="4.2" rx="3.3" ry="4" fill="#4779b9"/><path d="M0.5 14.5 C0.5 11 3 9.7 5.6 9 L5.9 7 H8.9 L9.2 9 C11.8 9.7 14.5 11 14.5 14.5 Z" fill="#4779b9"/></svg>
<div class="a li" style="left:1232.6px;top:555.6px;line-height:12px">Agg 1</div>
<svg style="left:1211.1px;top:581.3px" width="12.4" height="12" viewBox="0 0 15 14.6"><ellipse cx="7.4" cy="4.2" rx="3.3" ry="4" fill="#4779b9"/><path d="M0.5 14.5 C0.5 11 3 9.7 5.6 9 L5.9 7 H8.9 L9.2 9 C11.8 9.7 14.5 11 14.5 14.5 Z" fill="#4779b9"/></svg>
<div class="a li" style="left:1232.6px;top:582.6px;line-height:12px">Agg 2</div>
<svg style="left:1210px;top:604px" width="16" height="16" viewBox="0 0 16 16" fill="none" stroke="#8d8d8d" stroke-width="1.25"><circle cx="4.6" cy="12.5" r="4.2"/><circle cx="9.7" cy="7.3" r="4.4" fill="#fff"/><path d="M11 5.6 Q10.2 4.8 9.4 5.1 Q8.4 5.6 9.2 6.8 L10.2 7.8 Q10.9 8.8 10 9.4 Q9.1 9.8 8.3 9" stroke-width="1"/><path d="M3.4 10.6 L5.4 13" stroke-width="1"/></svg>
<div class="a li" style="left:1232.6px;top:609.6px;line-height:12px">All Zeros</div>
<svg style="left:1211.1px;top:635.3px" width="12.4" height="12" viewBox="0 0 15 14.6"><ellipse cx="7.4" cy="4.2" rx="3.3" ry="4" fill="#4779b9"/><path d="M0.5 14.5 C0.5 11 3 9.7 5.6 9 L5.9 7 H8.9 L9.2 9 C11.8 9.7 14.5 11 14.5 14.5 Z" fill="#4779b9"/></svg>
<div class="a li" style="left:1232.6px;top:636.6px;line-height:12px">Alt Email Address</div>
<svg style="left:1210px;top:662px" width="15" height="14" viewBox="0 0 15 14" fill="none" stroke-width="0.9"><rect x="6.2" y="0.4" width="7.8" height="9.2" rx="0.6" stroke="#9aa3ab" fill="#f4f6f8"/><path d="M7.6 2.6 H12.6 M7.6 4.4 H12.6 M7.6 6.2 H12.6" stroke="#aab2ba" stroke-width="0.8"/><rect x="1" y="8.2" width="10" height="4.4" rx="0.8" stroke="#9aa3ab" fill="#e9edf1"/><path d="M2.2 10.4 H6.5" stroke="#c4cbd2"/><path d="M8 11.6 L10.2 9" stroke="#6f9be0" stroke-width="1"/></svg>
<div class="a li" style="left:1232.6px;top:663.6px;line-height:12px">Another Customer First Name</div>
<svg style="left:1211.1px;top:689.3px" width="12.4" height="12" viewBox="0 0 15 14.6"><ellipse cx="7.4" cy="4.2" rx="3.3" ry="4" fill="#4779b9"/><path d="M0.5 14.5 C0.5 11 3 9.7 5.6 9 L5.9 7 H8.9 L9.2 9 C11.8 9.7 14.5 11 14.5 14.5 Z" fill="#4779b9"/></svg>
<div class="a li" style="left:1232.6px;top:690.6px;line-height:12px">Att1</div>
<svg style="left:1210px;top:716px" width="15" height="14" viewBox="0 0 15 14" fill="none" stroke-width="0.9"><rect x="6.2" y="0.4" width="7.8" height="9.2" rx="0.6" stroke="#9aa3ab" fill="#f4f6f8"/><path d="M7.6 2.6 H12.6 M7.6 4.4 H12.6 M7.6 6.2 H12.6" stroke="#aab2ba" stroke-width="0.8"/><rect x="1" y="8.2" width="10" height="4.4" rx="0.8" stroke="#9aa3ab" fill="#e9edf1"/><path d="M2.2 10.4 H6.5" stroke="#c4cbd2"/><path d="M8 11.6 L10.2 9" stroke="#6f9be0" stroke-width="1"/></svg>
<div class="a li" style="left:1232.6px;top:717.6px;line-height:12px">Aux Agg</div>
<svg style="left:1210px;top:743px" width="15" height="14" viewBox="0 0 15 14" fill="none" stroke-width="0.9"><rect x="6.2" y="0.4" width="7.8" height="9.2" rx="0.6" stroke="#9aa3ab" fill="#f4f6f8"/><path d="M7.6 2.6 H12.6 M7.6 4.4 H12.6 M7.6 6.2 H12.6" stroke="#aab2ba" stroke-width="0.8"/><rect x="1" y="8.2" width="10" height="4.4" rx="0.8" stroke="#9aa3ab" fill="#e9edf1"/><path d="M2.2 10.4 H6.5" stroke="#c4cbd2"/><path d="M8 11.6 L10.2 9" stroke="#6f9be0" stroke-width="1"/></svg>
<div class="a li" style="left:1232.6px;top:744.6px;line-height:12px">Aux Cust Key</div>
<svg style="left:1211.1px;top:770.3px" width="12.4" height="12" viewBox="0 0 15 14.6"><ellipse cx="7.4" cy="4.2" rx="3.3" ry="4" fill="#4779b9"/><path d="M0.5 14.5 C0.5 11 3 9.7 5.6 9 L5.9 7 H8.9 L9.2 9 C11.8 9.7 14.5 11 14.5 14.5 Z" fill="#4779b9"/></svg>
<div class="a li" style="left:1232.6px;top:771.6px;line-height:12px">Average Income By First Name</div>
<svg style="left:1211.1px;top:797.3px" width="12.4" height="12" viewBox="0 0 15 14.6"><ellipse cx="7.4" cy="4.2" rx="3.3" ry="4" fill="#4779b9"/><path d="M0.5 14.5 C0.5 11 3 9.7 5.6 9 L5.9 7 H8.9 L9.2 9 C11.8 9.7 14.5 11 14.5 14.5 Z" fill="#4779b9"/></svg>
<div class="a li" style="left:1232.6px;top:798.6px;line-height:12px">Basic Flag</div>
<svg style="left:1211.1px;top:824.3px" width="12.4" height="12" viewBox="0 0 15 14.6"><ellipse cx="7.4" cy="4.2" rx="3.3" ry="4" fill="#4779b9"/><path d="M0.5 14.5 C0.5 11 3 9.7 5.6 9 L5.9 7 H8.9 L9.2 9 C11.8 9.7 14.5 11 14.5 14.5 Z" fill="#4779b9"/></svg>
<div class="a li" style="left:1232.6px;top:825.6px;line-height:12px">bbb</div>
<svg style="left:1211.1px;top:851.3px" width="12.4" height="12" viewBox="0 0 15 14.6"><ellipse cx="7.4" cy="4.2" rx="3.3" ry="4" fill="#4779b9"/><path d="M0.5 14.5 C0.5 11 3 9.7 5.6 9 L5.9 7 H8.9 L9.2 9 C11.8 9.7 14.5 11 14.5 14.5 Z" fill="#4779b9"/></svg>
<div class="a li" style="left:1232.6px;top:852.6px;line-height:12px">Big Big Int</div>
<svg style="left:1211.1px;top:878.3px" width="12.4" height="12" viewBox="0 0 15 14.6"><ellipse cx="7.4" cy="4.2" rx="3.3" ry="4" fill="#4779b9"/><path d="M0.5 14.5 C0.5 11 3 9.7 5.6 9 L5.9 7 H8.9 L9.2 9 C11.8 9.7 14.5 11 14.5 14.5 Z" fill="#4779b9"/></svg>
<div class="a li" style="left:1232.6px;top:879.6px;line-height:12px">Big Dec</div>
<div class="a" style="left:1204px;top:900px;width:231px;height:7px;overflow:hidden"><svg style="left:7.1px;top:5.3px" width="12.4" height="12" viewBox="0 0 15 14.6"><ellipse cx="7.4" cy="4.2" rx="3.3" ry="4" fill="#4779b9"/><path d="M0.5 14.5 C0.5 11 3 9.7 5.6 9 L5.9 7 H8.9 L9.2 9 C11.8 9.7 14.5 11 14.5 14.5 Z" fill="#4779b9"/></svg></div>
<div class="a" style="left:1204px;top:907px;width:231px;height:21px;background:#fff"></div>
<div class="a" style="left:1395px;top:909px;width:16px;height:17px;background:#dde8f5"></div>
<svg style="left:1395px;top:910px" width="14" height="14" viewBox="0 0 14 14" fill="none" stroke="#4a6d96" stroke-width="0.9"><rect x="1" y="1.5" width="2.5" height="2.5"/><rect x="1" y="5.8" width="2.5" height="2.5"/><rect x="1" y="10" width="2.5" height="2.5"/><path d="M5 2.7 H13 M5 7 H13 M5 11.2 H13"/></svg>
<svg style="left:1417px;top:910px" width="14" height="13" viewBox="0 0 14 13"><rect x="0.5" y="0.5" width="13" height="12" fill="#8fcf8f" stroke="#3b7a4a"/><rect x="1" y="1" width="12" height="5" fill="#9ed1e8"/><path d="M1 12 V8 L5 5.5 L9 8 L13 6 V12 Z" fill="#2e9a3e"/></svg>
</body></html>
